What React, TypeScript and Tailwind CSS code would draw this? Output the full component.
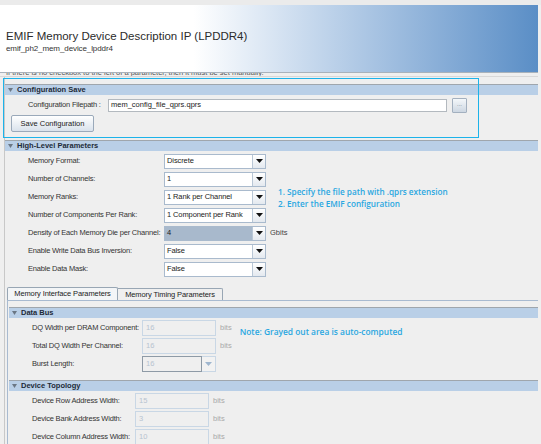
import React from 'react';

const Arrow: React.FC<{ muted?: boolean }> = ({ muted }) => (
  <svg width="7" height="4" viewBox="0 0 7 4">
    <path d="M0 0 H7 L3.5 4 Z" fill={muted ? '#9fb6cf' : '#111'} />
  </svg>
);

const SectionBar: React.FC<{ title: string }> = ({ title }) => (
  <div className="h-[11px] border-t border-[#9fa6ad] bg-[#b9cfe7] flex items-center pl-[3px] gap-[4px]">
    <svg width="5" height="4" viewBox="0 0 5 4">
      <path d="M0 0 H5 L2.5 4 Z" fill="#6b7785" />
    </svg>
    <span className="text-[7.5px] font-bold text-[#1d2a38] leading-none">{title}</span>
  </div>
);

const Select: React.FC<{ value: string; selected?: boolean }> = ({ value, selected }) => (
  <div className="w-[102px] h-[15px] shrink-0 flex border border-[#a9bacd] bg-white">
    <div className={`flex-1 flex items-center pl-[2px] text-[7.5px] text-[#222] tracking-[-0.1px] ${selected ? 'bg-[#a8b9cc]' : ''}`}>
      {value}
    </div>
    <div className="w-[13px] border-l border-[#b9c7d6] bg-gradient-to-b from-white to-[#e4e9ef] flex items-center justify-center">
      <Arrow />
    </div>
  </div>
);

const Disabled: React.FC<{ value: string }> = ({ value }) => (
  <div className="w-[74px] h-[16px] shrink-0 border border-[#c9d7e5] bg-[#efefef] flex items-center pl-[3px] text-[7.5px] text-[#b7c3cf]">
    {value}
  </div>
);

const highLevel = [
  { label: 'Memory Format:', value: 'Discrete' },
  { label: 'Number of Channels:', value: '1' },
  { label: 'Memory Ranks:', value: '1 Rank per Channel' },
  { label: 'Number of Components Per Rank:', value: '1 Component per Rank' },
  { label: 'Density of Each Memory Die per Channel:', value: '4', selected: true, unit: 'Gbits' },
  { label: 'Enable Write Data Bus Inversion:', value: 'False' },
  { label: 'Enable Data Mask:', value: 'False' },
];

const topology = [
  { label: 'Device Row Address Width:', value: '15' },
  { label: 'Device Bank Address Width:', value: '3' },
  { label: 'Device Column Address Width:', value: '10' },
];

const label = 'text-[7.5px] text-[#333] whitespace-nowrap tracking-[-0.2px] shrink-0';

const App: React.FC = () => {
  return (
    <div
      className="relative w-[541px] h-[444px] overflow-hidden bg-[#efefef] text-[#333]"
      style={{ fontFamily: '"Liberation Sans", Arial, sans-serif' }}
    >
      <div className="h-[5px] bg-[#ebebeb]" />

      {/* Title banner */}
      <div className="mr-[3px] h-[68px] border-b border-[#a9b2bb] bg-gradient-to-r from-white from-[36%] to-[#5a8ec6] flex flex-col justify-center pl-[6px] pt-[5px]">
        <div className="text-[11.5px] leading-[15px] text-[#2b2b2b]">EMIF Memory Device Description IP (LPDDR4)</div>
        <div className="text-[8px] leading-[10px] text-[#333] tracking-[-0.1px]">emif_ph2_mem_device_lpddr4</div>
      </div>

      {/* clipped help line */}
      <div className="h-[4px] overflow-hidden mr-[3px] border-b border-[#d8d8d8]">
        <div className="-mt-[5px] pl-[6px] text-[7.5px] leading-[9px] text-[#555] whitespace-nowrap">
          If there is no checkbox to the left of a parameter, then it must be set manually.
        </div>
      </div>

      <div className="ml-[4px] mr-[3px] border-l border-[#c8c8c8]">
        {/* Configuration Save */}
        <div className="pt-[7px]">
          <SectionBar title="Configuration Save" />
          <div className="flex items-center h-[16px] mt-[2px]">
            <span className={`pl-[23px] w-[103px] ${label}`}>Configuration Filepath :</span>
            <div className="w-[339px] h-[13px] border border-[#b3b9bf] bg-white flex items-center pl-[2px] text-[7.5px] text-[#222]">
              mem_config_file_qprs.qprs
            </div>
            <div className="ml-[5px] w-[15px] h-[15px] border border-[#a3b0bf] rounded-[1px] bg-gradient-to-b from-[#f4f7fa] to-[#cdd7e2] flex items-center justify-center text-[6px] text-[#6a7480] leading-none pb-[2px]">
              ...
            </div>
          </div>
          <div className="mt-[2px] ml-[6px] w-[83px] h-[17px] border border-[#9aa9ba] rounded-[2px] bg-gradient-to-b from-white to-[#d9e2ec] flex items-center justify-center text-[7.5px] text-[#222]">
            Save Configuration
          </div>
        </div>

        {/* High-Level Parameters */}
        <div className="mt-[8px]">
          <SectionBar title="High-Level Parameters" />
          <div className="flex">
            <div className="pt-[1px] w-[261px] shrink-0">
              {highLevel.map((row) => (
                <div key={row.label} className="h-[18px] flex items-center">
                  <span className={`pl-[23px] w-[159px] ${label}`}>{row.label}</span>
                  <Select value={row.value} selected={row.selected} />
                  {row.unit && <span className="ml-[4px] text-[7.5px] text-[#444] shrink-0">{row.unit}</span>}
                </div>
              ))}
            </div>
            <div
              className="ml-[12px] pt-[35px] text-[8.2px] leading-[11.5px] font-semibold text-[#2aa7e1] whitespace-nowrap"
              style={{ fontFamily: '"Open Sans", sans-serif' }}
            >
              <div>1. Specify the file path with .qprs extension</div>
              <div>2. Enter the EMIF configuration</div>
            </div>
          </div>
        </div>

        {/* Tabs */}
        <div className="mt-[9px] ml-[2px]">
          <div className="flex items-end h-[13px]">
            <div className="w-[111px] h-[13px] border border-b-0 border-[#98a6b4] rounded-t-[2px] bg-[#f3f5f7] flex items-center justify-center text-[7.5px] text-[#222] tracking-[-0.1px]">
              Memory Interface Parameters
            </div>
            <div className="w-[105px] h-[12px] border border-b-0 border-l-0 border-[#98a6b4] rounded-tr-[2px] bg-[#efefef] flex items-center justify-center text-[7.5px] text-[#222] tracking-[-0.1px]">
              Memory Timing Parameters
            </div>
          </div>
          <div className="border-t border-l border-[#a8bad0] pt-[6px] pl-[1px]">
            <SectionBar title="Data Bus" />
            <div className="flex">
              <div className="pt-[1px]">
                {['DQ Width per DRAM Component:', 'Total DQ Width Per Channel:'].map((l) => (
                  <div key={l} className="h-[18px] flex items-center">
                    <span className={`pl-[23px] w-[133px] ${label}`}>{l}</span>
                    <Disabled value="16" />
                    <span className="ml-[4px] text-[7.5px] text-[#a9a9a9]">bits</span>
                  </div>
                ))}
                <div className="h-[18px] flex items-center">
                  <span className={`pl-[23px] w-[133px] ${label}`}>Burst Length:</span>
                  <div className="w-[74px] h-[16px] flex border border-[#c9d7e5]">
                    <div className="flex-1 border border-[#8e9aa6] -m-[1px] mr-0 bg-[#efefef] flex items-center pl-[3px] text-[7.5px] text-[#b7c3cf]">16</div>
                    <div className="w-[13px] flex items-center justify-center bg-[#f2f2f2]">
                      <Arrow muted />
                    </div>
                  </div>
                </div>
              </div>
              <div
                className="ml-[8px] pt-[8px] text-[8.4px] font-semibold text-[#2aa7e1] whitespace-nowrap"
                style={{ fontFamily: '"Open Sans", sans-serif' }}
              >
                Note: Grayed out area is auto-computed
              </div>
            </div>

            <div className="mt-[7px]">
              <SectionBar title="Device Topology" />
              <div className="pt-[1px]">
                {topology.map((row) => (
                  <div key={row.label} className="h-[18px] flex items-center">
                    <span className={`pl-[23px] w-[126px] ${label}`}>{row.label}</span>
                    <Disabled value={row.value} />
                    <span className="ml-[4px] text-[7.5px] text-[#a9a9a9]">bits</span>
                  </div>
                ))}
              </div>
            </div>
          </div>
        </div>
      </div>

      {/* annotation frame */}
      <div className="absolute left-[3px] top-[78px] w-[476px] h-[60px] border-[1.5px] border-[#1cb3ea] pointer-events-none" />
    </div>
  );
};

export default App;
